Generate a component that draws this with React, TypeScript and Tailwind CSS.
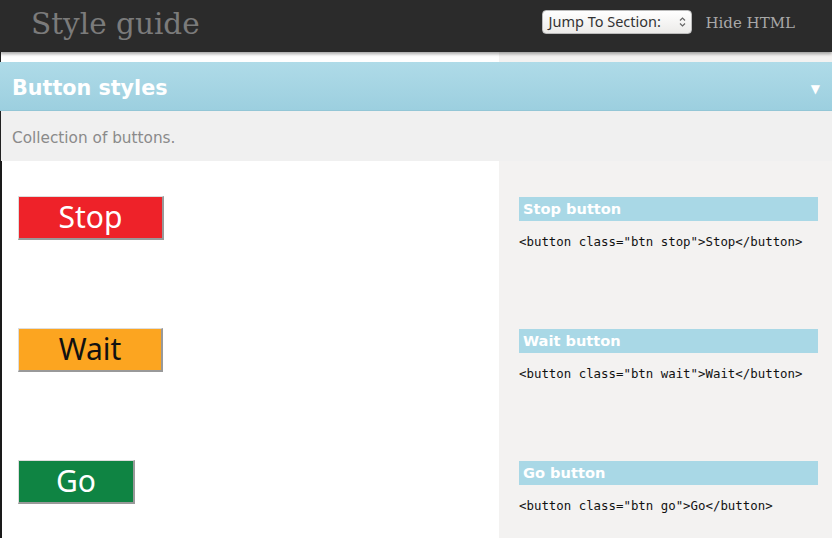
const rows = [
  { name: "Stop", cls: "stop", w: "w-[146px]", bg: "bg-[#ee2229]", fg: "text-white" },
  { name: "Wait", cls: "wait", w: "w-[145px]", bg: "bg-[#fca520]", fg: "text-[#111]" },
  { name: "Go", cls: "go", w: "w-[117px]", bg: "bg-[#0f8443]", fg: "text-white" },
];

export default function App() {
  return (
    <div className="w-[832px] h-[538px] overflow-hidden bg-[#f3f2f1] font-['DejaVu_Sans',sans-serif]">
      <header className="h-[52px] bg-[#2b2b2b] flex items-center justify-between pl-[31px] pr-[37px] shadow-[0_2px_3px_rgba(0,0,0,0.35)] relative z-10">
        <h1 className="text-[29.5px] leading-none text-[#7b7b7b] font-['DejaVu_Serif',serif] -mt-[2px]">Style guide</h1>
        <div className="flex items-center gap-[13px] -mt-[5px]">
          <div className="w-[150px] h-[24px] -mt-[3px] rounded-[4px] bg-gradient-to-b from-white to-[#ecebe9] border border-[#bbb] flex items-center justify-between pl-[5px] pr-[5px] text-[14.5px] text-[#333] font-['Noto_Sans',sans-serif]">
            <span>Jump To Section:</span>
            <svg width="7" height="12" viewBox="0 0 7 12">
              <path d="M1 4.5 L3.5 2 L6 4.5" fill="none" stroke="#666" strokeWidth="1.2" />
              <path d="M1 7.5 L3.5 10 L6 7.5" fill="none" stroke="#666" strokeWidth="1.2" />
            </svg>
          </div>
          <span className="text-[15px] text-[#a8a8a8] font-['DejaVu_Serif',serif]">Hide HTML</span>
        </div>
      </header>
      <div className="flex h-[10px]">
        <div className="w-[499px] bg-white border-l border-[#222]" />
        <div className="flex-1" />
      </div>
      <div className="h-[49px] bg-gradient-to-b from-[#afdbe8] to-[#9ccfdf] border-b border-[#93c6d6] flex items-center justify-between pl-[12px] pr-[12px] pt-[5px]">
        <h2 className="text-[20.7px] font-bold text-white">Button styles</h2>
        <span className="text-[12px] text-white">▼</span>
      </div>
      <div className="h-[50px] bg-[#f0f0f0] border-l border-[#222] flex items-center pl-[11px] pt-[4px] text-[15.3px] text-[#8a8a8a]">
        Collection of buttons.
      </div>
      {rows.map((r) => (
        <div key={r.cls} className="flex h-[132px]">
          <div className="w-[499px] bg-white border-l-2 border-[#1a1a1a] pt-[35px] pl-[16px]">
            <button
              className={`${r.w} h-[44px] ${r.bg} ${r.fg} border-t border-l border-t-[#ddd] border-l-[#ddd] border-r-2 border-b-2 border-r-[#999] border-b-[#999] text-[30px] leading-none font-['Noto_Sans',sans-serif] flex items-center justify-center pb-[2px]`}
            >
              {r.name}
            </button>
          </div>
          <div className="flex-1 pt-[36px] pl-[20px] pr-[14px]">
            <div className="h-[24px] bg-[#a9d8e6] pl-[4px] flex items-center text-[14.6px] font-bold text-white">
              {r.name} button
            </div>
            <div className="mt-[15px] text-[12.4px] leading-none text-[#111] font-['DejaVu_Sans_Mono',monospace]">
              {`<button class="btn ${r.cls}">${r.name}</button>`}
            </div>
          </div>
        </div>
      ))}
    </div>
  );
}
